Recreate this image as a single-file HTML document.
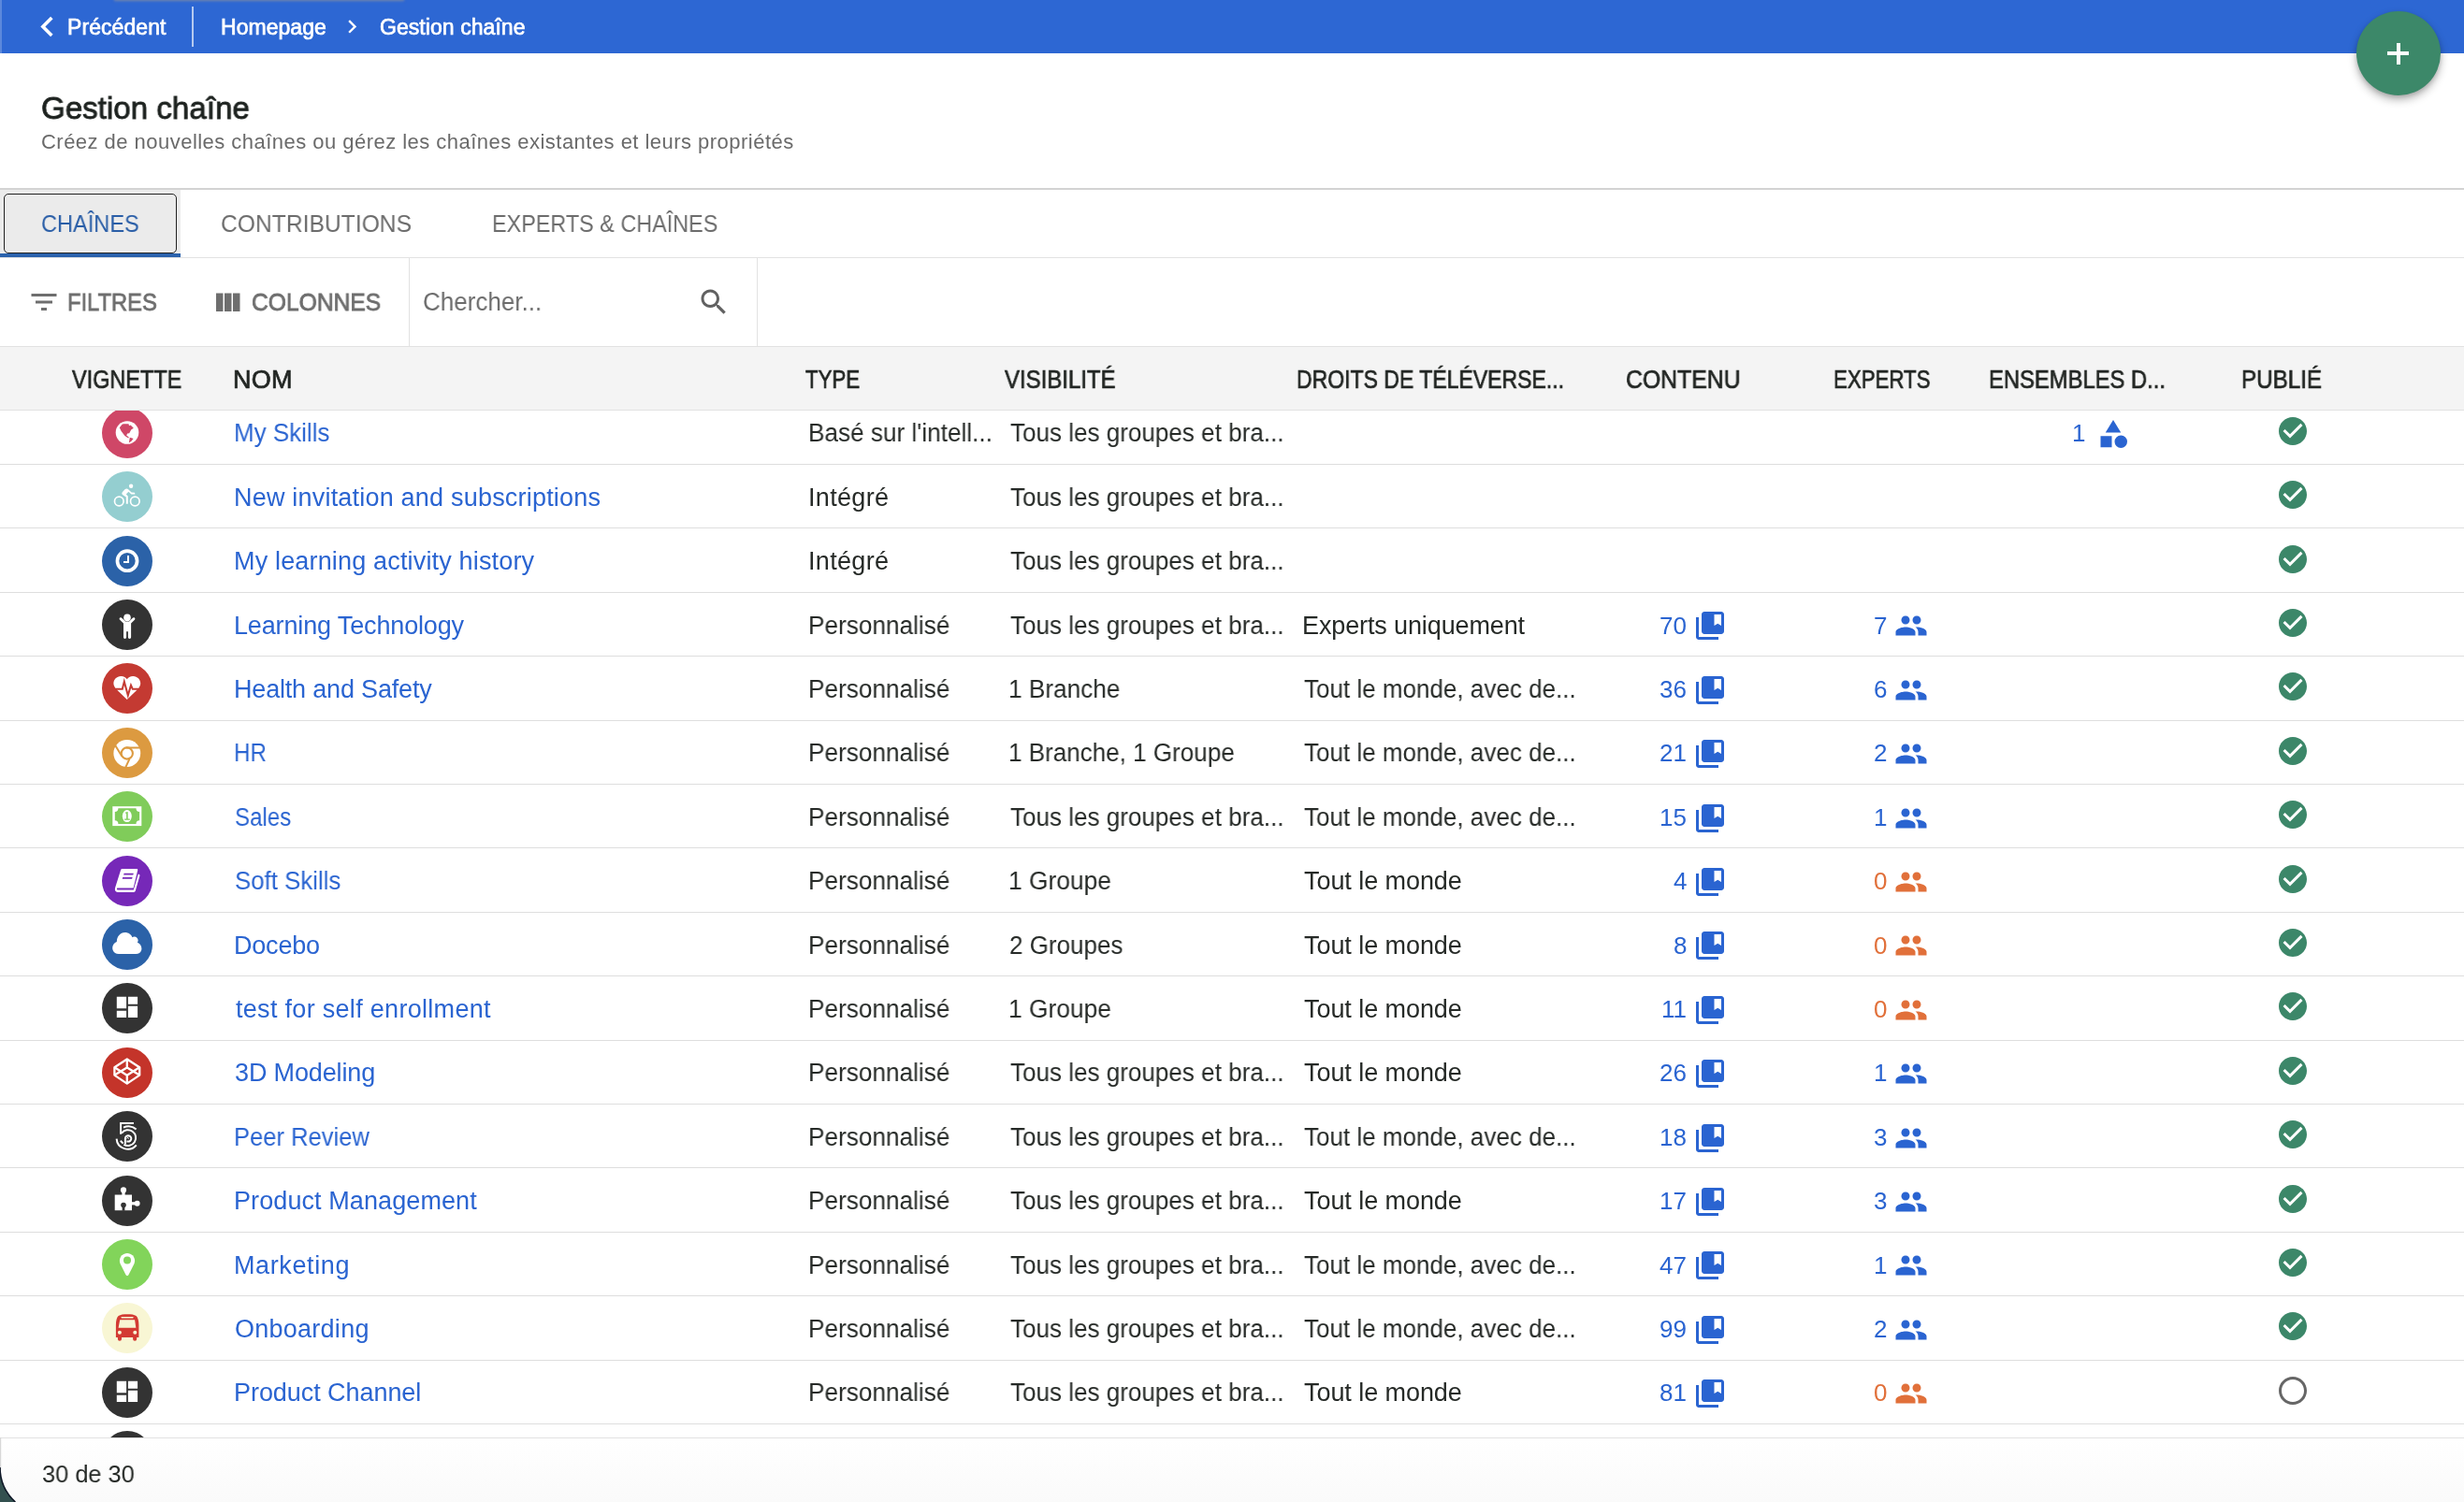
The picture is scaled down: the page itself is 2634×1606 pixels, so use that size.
<!DOCTYPE html>
<html lang="fr"><head><meta charset="utf-8"><title>Gestion chaîne</title>
<style>
html,body{margin:0;padding:0;}
body{width:2634px;height:1606px;overflow:hidden;position:relative;background:#fff;font-family:"Liberation Sans", sans-serif;}
.t{position:absolute;white-space:pre;font-family:"Liberation Sans", sans-serif;will-change:transform;}
.ic{position:absolute;overflow:visible;}
.hl{position:absolute;left:0;width:2634px;height:1px;background:#DEDEDE;}
#bar{position:absolute;left:0;top:0;width:2634px;height:57px;background:#2D67D3;}
#fab{position:absolute;left:2519px;top:12px;width:90px;height:90px;border-radius:50%;background:#3C8869;box-shadow:0 5px 10px rgba(0,0,0,0.28),0 2px 4px rgba(0,0,0,0.12);}
#fab:before{content:'';position:absolute;left:33px;top:43px;width:23.3px;height:4px;background:#fff;}
#fab:after{content:'';position:absolute;left:42.9px;top:33.5px;width:4px;height:23.4px;background:#fff;}
#hsep{position:absolute;left:0;top:201px;width:2634px;height:2px;background:#D3D3D3;}
#tabsel{position:absolute;left:0;top:203px;width:193px;height:68px;background:#EBEBEB;}
#tabfocus{position:absolute;left:4.2px;top:207px;width:184.6px;height:63.6px;border:1.3px solid #222;border-radius:5px;box-sizing:border-box;}
#tabline{position:absolute;left:0;top:271px;width:193px;height:4px;background:#2B62AC;}
#tabsb{position:absolute;left:0;top:275px;width:2634px;height:1.3px;background:#E2E2E2;}
#tbsep1{position:absolute;left:437px;top:276px;width:1.3px;height:94px;background:#E2E2E2;}
#tbsep2{position:absolute;left:809px;top:276px;width:1.3px;height:94px;background:#E2E2E2;}
#thead{position:absolute;left:0;top:370px;width:2634px;height:69.3px;background:#F4F4F4;border-top:1.3px solid #E2E2E2;border-bottom:1.3px solid #E2E2E2;box-sizing:border-box;z-index:2;}
#tbody{position:absolute;left:0;top:439px;width:2634px;height:1098.6px;overflow:hidden;}
#tbody .inner{position:absolute;left:0;top:-439px;width:2634px;height:1606px;}
#footer{position:absolute;left:0;top:1537px;width:2634px;height:69px;background:linear-gradient(#FFFFFF,#FAFAFA);border-top:1.3px solid #E2E2E2;box-sizing:border-box;}
#corner{position:absolute;left:0;top:1540px;width:20px;height:66px;overflow:hidden;}
</style></head><body>
<div id="bar"></div><div style="position:absolute;left:0;top:0;width:2px;height:57px;background:rgba(255,255,255,0.22)"></div><div style="position:absolute;left:122px;top:-3px;width:310px;height:3px;box-shadow:0 1px 3px rgba(140,145,160,0.8);background:rgba(140,145,160,0.6)"></div>
<svg class=ic style='left:29.2px;top:7.1px' width='43' height='43' viewBox='0 0 24 24'><path fill='#fff' d='M15.41 7.41L14 6l-6 6 6 6 1.41-1.41L10.83 12z'/></svg>
<div style="position:absolute;left:205.3px;top:7px;width:1.5px;height:43px;background:rgba(255,255,255,0.65)"></div>
<svg class=ic style='left:362px;top:14.2px' width='28.8' height='28.8' viewBox='0 0 24 24'><path fill='#fff' d='M10 6L8.59 7.41 13.17 12l-4.58 4.59L10 18l6-6z'/></svg>
<div id="fab"></div>
<div id="hsep"></div>
<div id="tabsel"></div><div id="tabfocus"></div><div id="tabline"></div><div id="tabsb"></div>
<div id="tbsep1"></div><div id="tbsep2"></div>
<svg class=ic style='left:28.70px;top:304.80px' width='36' height='36' viewBox='0 0 24 24'><path fill='#6E6E6E' d='M10 18h4v-2h-4v2zM3 6v2h18V6H3zm3 7h12v-2H6v2z'/></svg>
<svg class=ic style='left:225.00px;top:306.30px' width='36' height='36' viewBox='0 0 24 24'><path fill='#6E6E6E' d='M10 18h5V5h-5v13zm-6 0h5V5H4v13zM16 5v13h5V5h-5z'/></svg>
<svg class=ic style='left:744.50px;top:304.90px' width='36' height='36' viewBox='0 0 24 24'><path fill='#616161' d='M15.5 14h-.79l-.28-.27C15.41 12.59 16 11.11 16 9.5 16 5.91 13.09 3 9.5 3S3 5.91 3 9.5 5.91 16 9.5 16c1.61 0 3.09-.59 4.23-1.57l.27.28v.79l5 4.99L20.49 19l-4.99-5zm-6 0C7.01 14 5 11.99 5 9.5S7.01 5 9.5 5 14 7.01 14 9.5 11.99 14 9.5 14z'/></svg>
<div id="thead"></div>
<div id="tbody"><div class="inner">
<div class=hl style='top:496px'></div><div class=hl style='top:564px'></div><div class=hl style='top:633px'></div><div class=hl style='top:701px'></div><div class=hl style='top:770px'></div><div class=hl style='top:838px'></div><div class=hl style='top:906px'></div><div class=hl style='top:975px'></div><div class=hl style='top:1043px'></div><div class=hl style='top:1112px'></div><div class=hl style='top:1180px'></div><div class=hl style='top:1248px'></div><div class=hl style='top:1317px'></div><div class=hl style='top:1385px'></div><div class=hl style='top:1454px'></div><div class=hl style='top:1522px'></div>
<svg class=ic style='left:109px;top:435.80px' width='54' height='54' viewBox='0 0 54 54'><circle cx='27' cy='27' r='27' fill='#CF4767'/><circle cx='27' cy='26.5' r='12.3' fill='#fff'/><path fill='#CF4767' d='M18.8 21.2L21.6 17.8 23 17.2 28.5 17.2 29 19.2 30.6 18.5 33.8 21.8 31.2 23.4 29.2 27.2 27.2 27.6 26.2 29.6 28.8 31.6 28.2 32.6 24.4 30 20.6 25z M29.8 31.8L33.6 33 31.4 35.8 28.8 37.4z'/></svg><svg class=ic style='left:2240.50px;top:446.00px' width='36' height='36' viewBox='0 0 24 24'><path fill='#2A64D1' d='M12 2l-5.5 9h11z M17.5 13a4.5 4.5 0 1 0 0 9a4.5 4.5 0 1 0 0-9z M3 13.5h8v8H3z'/></svg><svg class=ic style='left:2432.70px;top:442.70px' width='36' height='36' viewBox='0 0 24 24'><path fill='#3C8769' d='M12 2C6.48 2 2 6.48 2 12s4.48 10 10 10 10-4.48 10-10S17.52 2 12 2zm-2 15l-5-5 1.41-1.41L10 14.17l7.59-7.59L19 8l-9 9z'/></svg><svg class=ic style='left:109px;top:504.20px' width='54' height='54' viewBox='0 0 54 54'><circle cx='27' cy='27' r='27' fill='#94CED0'/><g fill='none' stroke='#fff' stroke-width='1.7'><circle cx='18.3' cy='32' r='4.8'/><circle cx='35.3' cy='32' r='4.8'/></g><circle cx='31.1' cy='15.8' r='2.2' fill='#fff'/><path fill='#fff' d='M24.5 19.2C26 18.3 27.2 18.4 28.4 19.6L31.6 22.4 35 22.8 35.4 24.6 31.4 24.4 28.4 21.8 25.8 24.4 27.8 26.6 27.8 34.8 25.8 34.8 25.8 27.6 22 25C21 24.2 21.2 22.8 22 22z'/></svg><svg class=ic style='left:2432.70px;top:511.10px' width='36' height='36' viewBox='0 0 24 24'><path fill='#3C8769' d='M12 2C6.48 2 2 6.48 2 12s4.48 10 10 10 10-4.48 10-10S17.52 2 12 2zm-2 15l-5-5 1.41-1.41L10 14.17l7.59-7.59L19 8l-9 9z'/></svg><svg class=ic style='left:109px;top:572.60px' width='54' height='54' viewBox='0 0 54 54'><circle cx='27' cy='27' r='27' fill='#2B62A8'/><circle cx='27' cy='26.7' r='10.55' fill='none' stroke='#fff' stroke-width='3.7'/><path fill='#fff' d='M27 20.9h2v8.1h-6v-2h4z'/></svg><svg class=ic style='left:2432.70px;top:579.50px' width='36' height='36' viewBox='0 0 24 24'><path fill='#3C8769' d='M12 2C6.48 2 2 6.48 2 12s4.48 10 10 10 10-4.48 10-10S17.52 2 12 2zm-2 15l-5-5 1.41-1.41L10 14.17l7.59-7.59L19 8l-9 9z'/></svg><svg class=ic style='left:109px;top:641.00px' width='54' height='54' viewBox='0 0 54 54'><circle cx='27' cy='27' r='27' fill='#333333'/><circle cx='27' cy='19.4' r='3.8' fill='#fff'/><path fill='#fff' d='M23 25.6L19.1 21.7C18.4 21 18.5 20 19.2 19.5 19.8 19 20.7 19.1 21.2 19.7L25 23.6H29L32.8 19.7C33.3 19.1 34.2 19 34.8 19.5 35.5 20 35.6 21 34.9 21.7L31.1 25.6V40.3C31.1 41.2 30.4 41.9 29.5 41.9 28.6 41.9 27.9 41.2 27.9 40.3V34.2H26.1V40.3C26.1 41.2 25.4 41.9 24.5 41.9 23.6 41.9 23 41.2 23 40.3z'/></svg><svg class=ic style='left:1809.60px;top:651.30px' width='36' height='36' viewBox='0 0 24 24'><path fill='#2A64D1' d='M4 6H2v14c0 1.1.9 2 2 2h14v-2H4V6zm16-4H8c-1.1 0-2 .9-2 2v12c0 1.1.9 2 2 2h12c1.1 0 2-.9 2-2V4c0-1.1-.9-2-2-2zm0 10l-2.5-1.5L15 12V4h5v8z'/></svg><svg class=ic style='left:2025.30px;top:651.40px' width='36' height='36' viewBox='0 0 24 24'><path fill='#2A64D1' d='M16 11c1.66 0 2.99-1.34 2.99-3S17.66 5 16 5c-1.66 0-3 1.34-3 3s1.34 3 3 3zm-8 0c1.66 0 2.99-1.34 2.99-3S9.66 5 8 5C6.34 5 5 6.34 5 8s1.34 3 3 3zm0 2c-2.33 0-7 1.17-7 3.5V19h14v-2.5c0-2.33-4.67-3.5-7-3.5zm8 0c-.29 0-.62.02-.97.05 1.16.84 1.97 1.97 1.97 3.45V19h6v-2.5c0-2.33-4.67-3.5-7-3.5z'/></svg><svg class=ic style='left:2432.70px;top:647.90px' width='36' height='36' viewBox='0 0 24 24'><path fill='#3C8769' d='M12 2C6.48 2 2 6.48 2 12s4.48 10 10 10 10-4.48 10-10S17.52 2 12 2zm-2 15l-5-5 1.41-1.41L10 14.17l7.59-7.59L19 8l-9 9z'/></svg><svg class=ic style='left:109px;top:709.40px' width='54' height='54' viewBox='0 0 54 54'><circle cx='27' cy='27' r='27' fill='#C43A32'/><path fill='#fff' d='M26.8 17.3C25.6 15.2 23.2 13.9 20.2 14 15.8 14.2 12.4 17.6 12.4 21.6 12.4 23.6 13.2 25.4 14.4 26.9L26.8 39 39.2 26.9C40.4 25.4 41.2 23.6 41.2 21.6 41.2 17.6 37.8 14.2 33.4 14 30.4 13.9 28 15.2 26.8 17.3z'/><path fill='none' stroke='#C43A32' stroke-width='2' d='M10 27.8H21.8L23.8 19.8 27.8 34.6 31 23.6 32.8 27.8H44'/></svg><svg class=ic style='left:1809.60px;top:719.70px' width='36' height='36' viewBox='0 0 24 24'><path fill='#2A64D1' d='M4 6H2v14c0 1.1.9 2 2 2h14v-2H4V6zm16-4H8c-1.1 0-2 .9-2 2v12c0 1.1.9 2 2 2h12c1.1 0 2-.9 2-2V4c0-1.1-.9-2-2-2zm0 10l-2.5-1.5L15 12V4h5v8z'/></svg><svg class=ic style='left:2025.30px;top:719.80px' width='36' height='36' viewBox='0 0 24 24'><path fill='#2A64D1' d='M16 11c1.66 0 2.99-1.34 2.99-3S17.66 5 16 5c-1.66 0-3 1.34-3 3s1.34 3 3 3zm-8 0c1.66 0 2.99-1.34 2.99-3S9.66 5 8 5C6.34 5 5 6.34 5 8s1.34 3 3 3zm0 2c-2.33 0-7 1.17-7 3.5V19h14v-2.5c0-2.33-4.67-3.5-7-3.5zm8 0c-.29 0-.62.02-.97.05 1.16.84 1.97 1.97 1.97 3.45V19h6v-2.5c0-2.33-4.67-3.5-7-3.5z'/></svg><svg class=ic style='left:2432.70px;top:716.30px' width='36' height='36' viewBox='0 0 24 24'><path fill='#3C8769' d='M12 2C6.48 2 2 6.48 2 12s4.48 10 10 10 10-4.48 10-10S17.52 2 12 2zm-2 15l-5-5 1.41-1.41L10 14.17l7.59-7.59L19 8l-9 9z'/></svg><svg class=ic style='left:109px;top:777.80px' width='54' height='54' viewBox='0 0 54 54'><circle cx='27' cy='27' r='27' fill='#DC9A40'/><circle cx='26.8' cy='27.5' r='14.4' fill='#fff'/><circle cx='26.8' cy='27.5' r='6.1' fill='none' stroke='#DC9A40' stroke-width='2.1'/><path fill='none' stroke='#DC9A40' stroke-width='2' d='M25.5 21.5H41 M21.4 30.8L14.2 19 M29.6 33.2L25.2 42.6'/></svg><svg class=ic style='left:1809.60px;top:788.10px' width='36' height='36' viewBox='0 0 24 24'><path fill='#2A64D1' d='M4 6H2v14c0 1.1.9 2 2 2h14v-2H4V6zm16-4H8c-1.1 0-2 .9-2 2v12c0 1.1.9 2 2 2h12c1.1 0 2-.9 2-2V4c0-1.1-.9-2-2-2zm0 10l-2.5-1.5L15 12V4h5v8z'/></svg><svg class=ic style='left:2025.30px;top:788.20px' width='36' height='36' viewBox='0 0 24 24'><path fill='#2A64D1' d='M16 11c1.66 0 2.99-1.34 2.99-3S17.66 5 16 5c-1.66 0-3 1.34-3 3s1.34 3 3 3zm-8 0c1.66 0 2.99-1.34 2.99-3S9.66 5 8 5C6.34 5 5 6.34 5 8s1.34 3 3 3zm0 2c-2.33 0-7 1.17-7 3.5V19h14v-2.5c0-2.33-4.67-3.5-7-3.5zm8 0c-.29 0-.62.02-.97.05 1.16.84 1.97 1.97 1.97 3.45V19h6v-2.5c0-2.33-4.67-3.5-7-3.5z'/></svg><svg class=ic style='left:2432.70px;top:784.70px' width='36' height='36' viewBox='0 0 24 24'><path fill='#3C8769' d='M12 2C6.48 2 2 6.48 2 12s4.48 10 10 10 10-4.48 10-10S17.52 2 12 2zm-2 15l-5-5 1.41-1.41L10 14.17l7.59-7.59L19 8l-9 9z'/></svg><svg class=ic style='left:109px;top:846.20px' width='54' height='54' viewBox='0 0 54 54'><circle cx='27' cy='27' r='27' fill='#80CC5A'/><rect x='11.3' y='16.2' width='31' height='20.9' fill='#fff'/><path fill='#80CC5A' d='M17.4 18.3H36.5A3.6 3.6 0 0 0 40.1 21.9V31.3A3.6 3.6 0 0 0 36.5 34.9H17.4A3.6 3.6 0 0 0 13.8 31.3V21.9A3.6 3.6 0 0 0 17.4 18.3z'/><ellipse cx='26.8' cy='26.6' rx='5' ry='6.5' fill='#fff'/><path fill='#80CC5A' d='M25.2 22.6L27.7 21.9V29.6H29.8V30.8H24.1V29.6H26.1V23.7L25.2 24z'/></svg><svg class=ic style='left:1809.60px;top:856.50px' width='36' height='36' viewBox='0 0 24 24'><path fill='#2A64D1' d='M4 6H2v14c0 1.1.9 2 2 2h14v-2H4V6zm16-4H8c-1.1 0-2 .9-2 2v12c0 1.1.9 2 2 2h12c1.1 0 2-.9 2-2V4c0-1.1-.9-2-2-2zm0 10l-2.5-1.5L15 12V4h5v8z'/></svg><svg class=ic style='left:2025.30px;top:856.60px' width='36' height='36' viewBox='0 0 24 24'><path fill='#2A64D1' d='M16 11c1.66 0 2.99-1.34 2.99-3S17.66 5 16 5c-1.66 0-3 1.34-3 3s1.34 3 3 3zm-8 0c1.66 0 2.99-1.34 2.99-3S9.66 5 8 5C6.34 5 5 6.34 5 8s1.34 3 3 3zm0 2c-2.33 0-7 1.17-7 3.5V19h14v-2.5c0-2.33-4.67-3.5-7-3.5zm8 0c-.29 0-.62.02-.97.05 1.16.84 1.97 1.97 1.97 3.45V19h6v-2.5c0-2.33-4.67-3.5-7-3.5z'/></svg><svg class=ic style='left:2432.70px;top:853.10px' width='36' height='36' viewBox='0 0 24 24'><path fill='#3C8769' d='M12 2C6.48 2 2 6.48 2 12s4.48 10 10 10 10-4.48 10-10S17.52 2 12 2zm-2 15l-5-5 1.41-1.41L10 14.17l7.59-7.59L19 8l-9 9z'/></svg><svg class=ic style='left:109px;top:914.60px' width='54' height='54' viewBox='0 0 54 54'><circle cx='27' cy='27' r='27' fill='#7628B8'/><path fill='#fff' d='M21.6 14H37.2C38 14 38.4 14.7 38.2 15.4L33.6 34.6H16.6C15.6 34.6 15.6 36.5 16.6 36.5H33.8L38.8 19.6 39.8 20C40.4 20.3 40.6 21 40.4 21.6L35.8 37.6C35.5 38.5 34.8 39 33.9 39H17.2C15.2 39 13.6 37.4 13.9 35.4 14 34.6 14.2 34 14.4 33.2L20 15.4C20.2 14.6 20.8 14 21.6 14z'/><path fill='#7628B8' d='M23.6 18.7h10.2l-.5 1.8H23.1z M22.2 23h10.4l-.5 1.8H21.7z'/></svg><svg class=ic style='left:1809.60px;top:924.90px' width='36' height='36' viewBox='0 0 24 24'><path fill='#2A64D1' d='M4 6H2v14c0 1.1.9 2 2 2h14v-2H4V6zm16-4H8c-1.1 0-2 .9-2 2v12c0 1.1.9 2 2 2h12c1.1 0 2-.9 2-2V4c0-1.1-.9-2-2-2zm0 10l-2.5-1.5L15 12V4h5v8z'/></svg><svg class=ic style='left:2025.30px;top:925.00px' width='36' height='36' viewBox='0 0 24 24'><path fill='#E1703A' d='M16 11c1.66 0 2.99-1.34 2.99-3S17.66 5 16 5c-1.66 0-3 1.34-3 3s1.34 3 3 3zm-8 0c1.66 0 2.99-1.34 2.99-3S9.66 5 8 5C6.34 5 5 6.34 5 8s1.34 3 3 3zm0 2c-2.33 0-7 1.17-7 3.5V19h14v-2.5c0-2.33-4.67-3.5-7-3.5zm8 0c-.29 0-.62.02-.97.05 1.16.84 1.97 1.97 1.97 3.45V19h6v-2.5c0-2.33-4.67-3.5-7-3.5z'/></svg><svg class=ic style='left:2432.70px;top:921.50px' width='36' height='36' viewBox='0 0 24 24'><path fill='#3C8769' d='M12 2C6.48 2 2 6.48 2 12s4.48 10 10 10 10-4.48 10-10S17.52 2 12 2zm-2 15l-5-5 1.41-1.41L10 14.17l7.59-7.59L19 8l-9 9z'/></svg><svg class=ic style='left:109px;top:983.00px' width='54' height='54' viewBox='0 0 54 54'><circle cx='27' cy='27' r='27' fill='#2B62A8'/><path fill='#fff' d='M17.8 37.1C14.2 37.1 11.2 34.2 11.2 30.6 11.2 27.6 13.2 25 15.8 24 16 18.4 19.4 14 24.6 14 28.4 14 31.2 16.2 32.4 19.2 33 18.6 33.8 18.4 34.6 18.4 36.8 18.4 38.6 20.2 38.6 22.4 38.6 23.4 38.4 24 37.8 24.8 40.6 26 42.4 28.4 42.4 31.2 42.4 34.6 39.8 37.1 36.4 37.1z'/></svg><svg class=ic style='left:1809.60px;top:993.30px' width='36' height='36' viewBox='0 0 24 24'><path fill='#2A64D1' d='M4 6H2v14c0 1.1.9 2 2 2h14v-2H4V6zm16-4H8c-1.1 0-2 .9-2 2v12c0 1.1.9 2 2 2h12c1.1 0 2-.9 2-2V4c0-1.1-.9-2-2-2zm0 10l-2.5-1.5L15 12V4h5v8z'/></svg><svg class=ic style='left:2025.30px;top:993.40px' width='36' height='36' viewBox='0 0 24 24'><path fill='#E1703A' d='M16 11c1.66 0 2.99-1.34 2.99-3S17.66 5 16 5c-1.66 0-3 1.34-3 3s1.34 3 3 3zm-8 0c1.66 0 2.99-1.34 2.99-3S9.66 5 8 5C6.34 5 5 6.34 5 8s1.34 3 3 3zm0 2c-2.33 0-7 1.17-7 3.5V19h14v-2.5c0-2.33-4.67-3.5-7-3.5zm8 0c-.29 0-.62.02-.97.05 1.16.84 1.97 1.97 1.97 3.45V19h6v-2.5c0-2.33-4.67-3.5-7-3.5z'/></svg><svg class=ic style='left:2432.70px;top:989.90px' width='36' height='36' viewBox='0 0 24 24'><path fill='#3C8769' d='M12 2C6.48 2 2 6.48 2 12s4.48 10 10 10 10-4.48 10-10S17.52 2 12 2zm-2 15l-5-5 1.41-1.41L10 14.17l7.59-7.59L19 8l-9 9z'/></svg><svg class=ic style='left:109px;top:1051.40px' width='54' height='54' viewBox='0 0 54 54'><circle cx='27' cy='27' r='27' fill='#333333'/><path fill='#fff' d='M15.8 14.7h10.3v12.6H15.8z M15.8 29.7h10.3v7.4H15.8z M27.9 14.7h10.2v8.1H27.9z M27.9 24.8h10.2v12.3H27.9z'/></svg><svg class=ic style='left:1809.60px;top:1061.70px' width='36' height='36' viewBox='0 0 24 24'><path fill='#2A64D1' d='M4 6H2v14c0 1.1.9 2 2 2h14v-2H4V6zm16-4H8c-1.1 0-2 .9-2 2v12c0 1.1.9 2 2 2h12c1.1 0 2-.9 2-2V4c0-1.1-.9-2-2-2zm0 10l-2.5-1.5L15 12V4h5v8z'/></svg><svg class=ic style='left:2025.30px;top:1061.80px' width='36' height='36' viewBox='0 0 24 24'><path fill='#E1703A' d='M16 11c1.66 0 2.99-1.34 2.99-3S17.66 5 16 5c-1.66 0-3 1.34-3 3s1.34 3 3 3zm-8 0c1.66 0 2.99-1.34 2.99-3S9.66 5 8 5C6.34 5 5 6.34 5 8s1.34 3 3 3zm0 2c-2.33 0-7 1.17-7 3.5V19h14v-2.5c0-2.33-4.67-3.5-7-3.5zm8 0c-.29 0-.62.02-.97.05 1.16.84 1.97 1.97 1.97 3.45V19h6v-2.5c0-2.33-4.67-3.5-7-3.5z'/></svg><svg class=ic style='left:2432.70px;top:1058.30px' width='36' height='36' viewBox='0 0 24 24'><path fill='#3C8769' d='M12 2C6.48 2 2 6.48 2 12s4.48 10 10 10 10-4.48 10-10S17.52 2 12 2zm-2 15l-5-5 1.41-1.41L10 14.17l7.59-7.59L19 8l-9 9z'/></svg><svg class=ic style='left:109px;top:1119.80px' width='54' height='54' viewBox='0 0 54 54'><circle cx='27' cy='27' r='27' fill='#C4342A'/><g fill='none' stroke='#fff' stroke-width='2.3' stroke-linejoin='round'><path d='M26.8 12.5L40.2 21.2V29.6L26.8 38.6 13.4 29.6V21.2z'/><path d='M26.8 12.5V21.4 M26.8 29.8V38.6 M13.4 21.2L26.8 29.8 40.2 21.2 M13.4 29.6L26.8 21.4 40.2 29.6'/></g></svg><svg class=ic style='left:1809.60px;top:1130.10px' width='36' height='36' viewBox='0 0 24 24'><path fill='#2A64D1' d='M4 6H2v14c0 1.1.9 2 2 2h14v-2H4V6zm16-4H8c-1.1 0-2 .9-2 2v12c0 1.1.9 2 2 2h12c1.1 0 2-.9 2-2V4c0-1.1-.9-2-2-2zm0 10l-2.5-1.5L15 12V4h5v8z'/></svg><svg class=ic style='left:2025.30px;top:1130.20px' width='36' height='36' viewBox='0 0 24 24'><path fill='#2A64D1' d='M16 11c1.66 0 2.99-1.34 2.99-3S17.66 5 16 5c-1.66 0-3 1.34-3 3s1.34 3 3 3zm-8 0c1.66 0 2.99-1.34 2.99-3S9.66 5 8 5C6.34 5 5 6.34 5 8s1.34 3 3 3zm0 2c-2.33 0-7 1.17-7 3.5V19h14v-2.5c0-2.33-4.67-3.5-7-3.5zm8 0c-.29 0-.62.02-.97.05 1.16.84 1.97 1.97 1.97 3.45V19h6v-2.5c0-2.33-4.67-3.5-7-3.5z'/></svg><svg class=ic style='left:2432.70px;top:1126.70px' width='36' height='36' viewBox='0 0 24 24'><path fill='#3C8769' d='M12 2C6.48 2 2 6.48 2 12s4.48 10 10 10 10-4.48 10-10S17.52 2 12 2zm-2 15l-5-5 1.41-1.41L10 14.17l7.59-7.59L19 8l-9 9z'/></svg><svg class=ic style='left:109px;top:1188.20px' width='54' height='54' viewBox='0 0 54 54'><circle cx='27' cy='27' r='27' fill='#333333'/><g fill='none' stroke='#fff' stroke-width='2'><path d='M34 13H20.1V24.8'/><path d='M23 17.6C27 15.6 32.5 15.8 36.6 19.4'/><path d='M21 23.6A8.4 8.4 0 1 1 23.4 35.8'/><path d='M15.6 29.6A12 12 0 0 0 36.8 36.4'/><path d='M19.8 31.8L22.6 34.6'/><path d='M24.9 35.4V29.2A3.2 3.2 0 1 1 27.8 32.6H26.4'/></g><path stroke='#fff' stroke-width='1' d='M26.6 27.6l2 2 M28.6 27.6l-2 2'/></svg><svg class=ic style='left:1809.60px;top:1198.50px' width='36' height='36' viewBox='0 0 24 24'><path fill='#2A64D1' d='M4 6H2v14c0 1.1.9 2 2 2h14v-2H4V6zm16-4H8c-1.1 0-2 .9-2 2v12c0 1.1.9 2 2 2h12c1.1 0 2-.9 2-2V4c0-1.1-.9-2-2-2zm0 10l-2.5-1.5L15 12V4h5v8z'/></svg><svg class=ic style='left:2025.30px;top:1198.60px' width='36' height='36' viewBox='0 0 24 24'><path fill='#2A64D1' d='M16 11c1.66 0 2.99-1.34 2.99-3S17.66 5 16 5c-1.66 0-3 1.34-3 3s1.34 3 3 3zm-8 0c1.66 0 2.99-1.34 2.99-3S9.66 5 8 5C6.34 5 5 6.34 5 8s1.34 3 3 3zm0 2c-2.33 0-7 1.17-7 3.5V19h14v-2.5c0-2.33-4.67-3.5-7-3.5zm8 0c-.29 0-.62.02-.97.05 1.16.84 1.97 1.97 1.97 3.45V19h6v-2.5c0-2.33-4.67-3.5-7-3.5z'/></svg><svg class=ic style='left:2432.70px;top:1195.10px' width='36' height='36' viewBox='0 0 24 24'><path fill='#3C8769' d='M12 2C6.48 2 2 6.48 2 12s4.48 10 10 10 10-4.48 10-10S17.52 2 12 2zm-2 15l-5-5 1.41-1.41L10 14.17l7.59-7.59L19 8l-9 9z'/></svg><svg class=ic style='left:109px;top:1256.60px' width='54' height='54' viewBox='0 0 54 54'><circle cx='27' cy='27' r='27' fill='#333333'/><rect x='13.7' y='20.5' width='18.3' height='16.7' fill='#fff'/><circle cx='23' cy='15.4' r='3.1' fill='#fff'/><rect x='21.4' y='17' width='3.2' height='4' fill='#fff'/><circle cx='37.6' cy='29.8' r='3' fill='#fff'/><rect x='31' y='28.2' width='4' height='3.2' fill='#fff'/><circle cx='23' cy='31.5' r='2.8' fill='#333333'/><rect x='21.6' y='32' width='2.8' height='5.6' fill='#333333'/></svg><svg class=ic style='left:1809.60px;top:1266.90px' width='36' height='36' viewBox='0 0 24 24'><path fill='#2A64D1' d='M4 6H2v14c0 1.1.9 2 2 2h14v-2H4V6zm16-4H8c-1.1 0-2 .9-2 2v12c0 1.1.9 2 2 2h12c1.1 0 2-.9 2-2V4c0-1.1-.9-2-2-2zm0 10l-2.5-1.5L15 12V4h5v8z'/></svg><svg class=ic style='left:2025.30px;top:1267.00px' width='36' height='36' viewBox='0 0 24 24'><path fill='#2A64D1' d='M16 11c1.66 0 2.99-1.34 2.99-3S17.66 5 16 5c-1.66 0-3 1.34-3 3s1.34 3 3 3zm-8 0c1.66 0 2.99-1.34 2.99-3S9.66 5 8 5C6.34 5 5 6.34 5 8s1.34 3 3 3zm0 2c-2.33 0-7 1.17-7 3.5V19h14v-2.5c0-2.33-4.67-3.5-7-3.5zm8 0c-.29 0-.62.02-.97.05 1.16.84 1.97 1.97 1.97 3.45V19h6v-2.5c0-2.33-4.67-3.5-7-3.5z'/></svg><svg class=ic style='left:2432.70px;top:1263.50px' width='36' height='36' viewBox='0 0 24 24'><path fill='#3C8769' d='M12 2C6.48 2 2 6.48 2 12s4.48 10 10 10 10-4.48 10-10S17.52 2 12 2zm-2 15l-5-5 1.41-1.41L10 14.17l7.59-7.59L19 8l-9 9z'/></svg><svg class=ic style='left:109px;top:1325.00px' width='54' height='54' viewBox='0 0 54 54'><circle cx='27' cy='27' r='27' fill='#82D45A'/><path fill='#fff' d='M27 14.9C22.5 14.9 18.9 18.5 18.9 23 18.9 24.4 19.3 25.6 19.8 26.8L25.6 38.3C26.2 39.4 27.8 39.4 28.4 38.3L34.2 26.8C34.7 25.6 35.1 24.4 35.1 23 35.1 18.5 31.5 14.9 27 14.9z'/><circle cx='27' cy='22.5' r='4' fill='#82D45A'/></svg><svg class=ic style='left:1809.60px;top:1335.30px' width='36' height='36' viewBox='0 0 24 24'><path fill='#2A64D1' d='M4 6H2v14c0 1.1.9 2 2 2h14v-2H4V6zm16-4H8c-1.1 0-2 .9-2 2v12c0 1.1.9 2 2 2h12c1.1 0 2-.9 2-2V4c0-1.1-.9-2-2-2zm0 10l-2.5-1.5L15 12V4h5v8z'/></svg><svg class=ic style='left:2025.30px;top:1335.40px' width='36' height='36' viewBox='0 0 24 24'><path fill='#2A64D1' d='M16 11c1.66 0 2.99-1.34 2.99-3S17.66 5 16 5c-1.66 0-3 1.34-3 3s1.34 3 3 3zm-8 0c1.66 0 2.99-1.34 2.99-3S9.66 5 8 5C6.34 5 5 6.34 5 8s1.34 3 3 3zm0 2c-2.33 0-7 1.17-7 3.5V19h14v-2.5c0-2.33-4.67-3.5-7-3.5zm8 0c-.29 0-.62.02-.97.05 1.16.84 1.97 1.97 1.97 3.45V19h6v-2.5c0-2.33-4.67-3.5-7-3.5z'/></svg><svg class=ic style='left:2432.70px;top:1331.90px' width='36' height='36' viewBox='0 0 24 24'><path fill='#3C8769' d='M12 2C6.48 2 2 6.48 2 12s4.48 10 10 10 10-4.48 10-10S17.52 2 12 2zm-2 15l-5-5 1.41-1.41L10 14.17l7.59-7.59L19 8l-9 9z'/></svg><svg class=ic style='left:109px;top:1393.40px' width='54' height='54' viewBox='0 0 54 54'><circle cx='27' cy='27' r='27' fill='#F8F6D4'/><path fill='#D33A33' d='M14.9 36.9V24C14.9 19 15.8 15.4 17.6 14 19.6 12.6 23 12.2 27.1 12.2 31.2 12.2 34.6 12.6 36.6 14 38.4 15.4 39.4 19 39.4 24V36.9z M16.9 36.5h4.1v2.3a2.05 2.05 0 0 1-4.1 0z M33.1 36.5h4.1v2.3a2.05 2.05 0 0 1-4.1 0z'/><path fill='#F8F6D4' d='M21.2 14.9h11.7a.8 .8 0 0 1 0 1.6h-11.7a.8 .8 0 0 1 0-1.6z M19.2 18.3H35.1L36.3 26.8H17.6z'/><circle cx='18.9' cy='31.8' r='2' fill='#F8F6D4'/><circle cx='35.3' cy='31.8' r='2' fill='#F8F6D4'/></svg><svg class=ic style='left:1809.60px;top:1403.70px' width='36' height='36' viewBox='0 0 24 24'><path fill='#2A64D1' d='M4 6H2v14c0 1.1.9 2 2 2h14v-2H4V6zm16-4H8c-1.1 0-2 .9-2 2v12c0 1.1.9 2 2 2h12c1.1 0 2-.9 2-2V4c0-1.1-.9-2-2-2zm0 10l-2.5-1.5L15 12V4h5v8z'/></svg><svg class=ic style='left:2025.30px;top:1403.80px' width='36' height='36' viewBox='0 0 24 24'><path fill='#2A64D1' d='M16 11c1.66 0 2.99-1.34 2.99-3S17.66 5 16 5c-1.66 0-3 1.34-3 3s1.34 3 3 3zm-8 0c1.66 0 2.99-1.34 2.99-3S9.66 5 8 5C6.34 5 5 6.34 5 8s1.34 3 3 3zm0 2c-2.33 0-7 1.17-7 3.5V19h14v-2.5c0-2.33-4.67-3.5-7-3.5zm8 0c-.29 0-.62.02-.97.05 1.16.84 1.97 1.97 1.97 3.45V19h6v-2.5c0-2.33-4.67-3.5-7-3.5z'/></svg><svg class=ic style='left:2432.70px;top:1400.30px' width='36' height='36' viewBox='0 0 24 24'><path fill='#3C8769' d='M12 2C6.48 2 2 6.48 2 12s4.48 10 10 10 10-4.48 10-10S17.52 2 12 2zm-2 15l-5-5 1.41-1.41L10 14.17l7.59-7.59L19 8l-9 9z'/></svg><svg class=ic style='left:109px;top:1461.80px' width='54' height='54' viewBox='0 0 54 54'><circle cx='27' cy='27' r='27' fill='#333333'/><path fill='#fff' d='M15.8 14.7h10.3v12.6H15.8z M15.8 29.7h10.3v7.4H15.8z M27.9 14.7h10.2v8.1H27.9z M27.9 24.8h10.2v12.3H27.9z'/></svg><svg class=ic style='left:1809.60px;top:1472.10px' width='36' height='36' viewBox='0 0 24 24'><path fill='#2A64D1' d='M4 6H2v14c0 1.1.9 2 2 2h14v-2H4V6zm16-4H8c-1.1 0-2 .9-2 2v12c0 1.1.9 2 2 2h12c1.1 0 2-.9 2-2V4c0-1.1-.9-2-2-2zm0 10l-2.5-1.5L15 12V4h5v8z'/></svg><svg class=ic style='left:2025.30px;top:1472.20px' width='36' height='36' viewBox='0 0 24 24'><path fill='#E1703A' d='M16 11c1.66 0 2.99-1.34 2.99-3S17.66 5 16 5c-1.66 0-3 1.34-3 3s1.34 3 3 3zm-8 0c1.66 0 2.99-1.34 2.99-3S9.66 5 8 5C6.34 5 5 6.34 5 8s1.34 3 3 3zm0 2c-2.33 0-7 1.17-7 3.5V19h14v-2.5c0-2.33-4.67-3.5-7-3.5zm8 0c-.29 0-.62.02-.97.05 1.16.84 1.97 1.97 1.97 3.45V19h6v-2.5c0-2.33-4.67-3.5-7-3.5z'/></svg><svg class=ic style='left:2432.70px;top:1468.70px' width='36' height='36' viewBox='0 0 24 24'><path fill='#666666' d='M12 2C6.48 2 2 6.48 2 12s4.48 10 10 10 10-4.48 10-10S17.52 2 12 2zm0 18c-4.42 0-8-3.58-8-8s3.58-8 8-8 8 3.58 8 8-3.58 8-8 8z'/></svg><svg class=ic style='left:109px;top:1529.60px' width='54' height='54' viewBox='0 0 54 54'><circle cx='27' cy='27' r='27' fill='#333333'/></svg>

<div class=t style='left:250.08px;top:450.40px;font-size:27px;line-height:27px;font-weight:normal;color:#2A64D1;letter-spacing:0.000px;transform:scaleX(0.9616);transform-origin:0 0;'>My Skills</div><div class=t style='left:864.06px;top:450.40px;font-size:27px;line-height:27px;font-weight:normal;color:#262A27;letter-spacing:0.000px;transform:scaleX(0.9688);transform-origin:0 0;'>Basé sur l'intell...</div><div class=t style='left:1080.30px;top:450.40px;font-size:27px;line-height:27px;font-weight:normal;color:#262A27;letter-spacing:0.000px;transform:scaleX(0.9646);transform-origin:0 0;'>Tous les groupes et bra...</div><div class=t style='left:250.00px;top:518.80px;font-size:27px;line-height:27px;font-weight:normal;color:#2A64D1;letter-spacing:0.203px;'>New invitation and subscriptions</div><div class=t style='left:864.00px;top:518.80px;font-size:27px;line-height:27px;font-weight:normal;color:#262A27;letter-spacing:0.326px;'>Intégré</div><div class=t style='left:1080.30px;top:518.80px;font-size:27px;line-height:27px;font-weight:normal;color:#262A27;letter-spacing:0.000px;transform:scaleX(0.9646);transform-origin:0 0;'>Tous les groupes et bra...</div><div class=t style='left:250.00px;top:587.20px;font-size:27px;line-height:27px;font-weight:normal;color:#2A64D1;letter-spacing:0.167px;'>My learning activity history</div><div class=t style='left:864.00px;top:587.20px;font-size:27px;line-height:27px;font-weight:normal;color:#262A27;letter-spacing:0.326px;'>Intégré</div><div class=t style='left:1080.30px;top:587.20px;font-size:27px;line-height:27px;font-weight:normal;color:#262A27;letter-spacing:0.000px;transform:scaleX(0.9646);transform-origin:0 0;'>Tous les groupes et bra...</div><div class=t style='left:250.00px;top:655.60px;font-size:27px;line-height:27px;font-weight:normal;color:#2A64D1;letter-spacing:-0.144px;'>Learning Technology</div><div class=t style='left:864.06px;top:655.60px;font-size:27px;line-height:27px;font-weight:normal;color:#262A27;letter-spacing:0.000px;transform:scaleX(0.9701);transform-origin:0 0;'>Personnalisé</div><div class=t style='left:1080.30px;top:655.60px;font-size:27px;line-height:27px;font-weight:normal;color:#262A27;letter-spacing:0.000px;transform:scaleX(0.9646);transform-origin:0 0;'>Tous les groupes et bra...</div><div class=t style='left:1392.20px;top:655.60px;font-size:27px;line-height:27px;font-weight:normal;color:#262A27;letter-spacing:-0.120px;'>Experts uniquement</div><div class=t style='left:250.00px;top:724.00px;font-size:27px;line-height:27px;font-weight:normal;color:#2A64D1;letter-spacing:-0.184px;'>Health and Safety</div><div class=t style='left:864.06px;top:724.00px;font-size:27px;line-height:27px;font-weight:normal;color:#262A27;letter-spacing:0.000px;transform:scaleX(0.9701);transform-origin:0 0;'>Personnalisé</div><div class=t style='left:1078.36px;top:724.00px;font-size:27px;line-height:27px;font-weight:normal;color:#262A27;letter-spacing:0.000px;transform:scaleX(0.9703);transform-origin:0 0;'>1 Branche</div><div class=t style='left:1394.20px;top:724.00px;font-size:27px;line-height:27px;font-weight:normal;color:#262A27;letter-spacing:0.000px;transform:scaleX(0.9634);transform-origin:0 0;'>Tout le monde, avec de...</div><div class=t style='left:250.21px;top:792.40px;font-size:27px;line-height:27px;font-weight:normal;color:#2A64D1;letter-spacing:0.000px;transform:scaleX(0.8959);transform-origin:0 0;'>HR</div><div class=t style='left:864.06px;top:792.40px;font-size:27px;line-height:27px;font-weight:normal;color:#262A27;letter-spacing:0.000px;transform:scaleX(0.9701);transform-origin:0 0;'>Personnalisé</div><div class=t style='left:1078.37px;top:792.40px;font-size:27px;line-height:27px;font-weight:normal;color:#262A27;letter-spacing:0.000px;transform:scaleX(0.9643);transform-origin:0 0;'>1 Branche, 1 Groupe</div><div class=t style='left:1394.20px;top:792.40px;font-size:27px;line-height:27px;font-weight:normal;color:#262A27;letter-spacing:0.000px;transform:scaleX(0.9634);transform-origin:0 0;'>Tout le monde, avec de...</div><div class=t style='left:251.11px;top:860.80px;font-size:27px;line-height:27px;font-weight:normal;color:#2A64D1;letter-spacing:0.000px;transform:scaleX(0.8919);transform-origin:0 0;'>Sales</div><div class=t style='left:864.06px;top:860.80px;font-size:27px;line-height:27px;font-weight:normal;color:#262A27;letter-spacing:0.000px;transform:scaleX(0.9701);transform-origin:0 0;'>Personnalisé</div><div class=t style='left:1080.30px;top:860.80px;font-size:27px;line-height:27px;font-weight:normal;color:#262A27;letter-spacing:0.000px;transform:scaleX(0.9646);transform-origin:0 0;'>Tous les groupes et bra...</div><div class=t style='left:1394.20px;top:860.80px;font-size:27px;line-height:27px;font-weight:normal;color:#262A27;letter-spacing:0.000px;transform:scaleX(0.9634);transform-origin:0 0;'>Tout le monde, avec de...</div><div class=t style='left:251.04px;top:929.20px;font-size:27px;line-height:27px;font-weight:normal;color:#2A64D1;letter-spacing:0.000px;transform:scaleX(0.9561);transform-origin:0 0;'>Soft Skills</div><div class=t style='left:864.06px;top:929.20px;font-size:27px;line-height:27px;font-weight:normal;color:#262A27;letter-spacing:0.000px;transform:scaleX(0.9701);transform-origin:0 0;'>Personnalisé</div><div class=t style='left:1078.35px;top:929.20px;font-size:27px;line-height:27px;font-weight:normal;color:#262A27;letter-spacing:0.000px;transform:scaleX(0.9766);transform-origin:0 0;'>1 Groupe</div><div class=t style='left:1394.20px;top:929.20px;font-size:27px;line-height:27px;font-weight:normal;color:#262A27;letter-spacing:-0.066px;'>Tout le monde</div><div class=t style='left:250.00px;top:997.60px;font-size:27px;line-height:27px;font-weight:normal;color:#2A64D1;letter-spacing:-0.209px;'>Docebo</div><div class=t style='left:864.06px;top:997.60px;font-size:27px;line-height:27px;font-weight:normal;color:#262A27;letter-spacing:0.000px;transform:scaleX(0.9701);transform-origin:0 0;'>Personnalisé</div><div class=t style='left:1079.34px;top:997.60px;font-size:27px;line-height:27px;font-weight:normal;color:#262A27;letter-spacing:0.000px;transform:scaleX(0.9633);transform-origin:0 0;'>2 Groupes</div><div class=t style='left:1394.20px;top:997.60px;font-size:27px;line-height:27px;font-weight:normal;color:#262A27;letter-spacing:-0.066px;'>Tout le monde</div><div class=t style='left:252.00px;top:1066.00px;font-size:27px;line-height:27px;font-weight:normal;color:#2A64D1;letter-spacing:0.300px;'>test for self enrollment</div><div class=t style='left:864.06px;top:1066.00px;font-size:27px;line-height:27px;font-weight:normal;color:#262A27;letter-spacing:0.000px;transform:scaleX(0.9701);transform-origin:0 0;'>Personnalisé</div><div class=t style='left:1078.35px;top:1066.00px;font-size:27px;line-height:27px;font-weight:normal;color:#262A27;letter-spacing:0.000px;transform:scaleX(0.9766);transform-origin:0 0;'>1 Groupe</div><div class=t style='left:1394.20px;top:1066.00px;font-size:27px;line-height:27px;font-weight:normal;color:#262A27;letter-spacing:-0.066px;'>Tout le monde</div><div class=t style='left:251.00px;top:1134.40px;font-size:27px;line-height:27px;font-weight:normal;color:#2A64D1;letter-spacing:-0.137px;'>3D Modeling</div><div class=t style='left:864.06px;top:1134.40px;font-size:27px;line-height:27px;font-weight:normal;color:#262A27;letter-spacing:0.000px;transform:scaleX(0.9701);transform-origin:0 0;'>Personnalisé</div><div class=t style='left:1080.30px;top:1134.40px;font-size:27px;line-height:27px;font-weight:normal;color:#262A27;letter-spacing:0.000px;transform:scaleX(0.9646);transform-origin:0 0;'>Tous les groupes et bra...</div><div class=t style='left:1394.20px;top:1134.40px;font-size:27px;line-height:27px;font-weight:normal;color:#262A27;letter-spacing:-0.066px;'>Tout le monde</div><div class=t style='left:250.11px;top:1202.80px;font-size:27px;line-height:27px;font-weight:normal;color:#2A64D1;letter-spacing:0.000px;transform:scaleX(0.9468);transform-origin:0 0;'>Peer Review</div><div class=t style='left:864.06px;top:1202.80px;font-size:27px;line-height:27px;font-weight:normal;color:#262A27;letter-spacing:0.000px;transform:scaleX(0.9701);transform-origin:0 0;'>Personnalisé</div><div class=t style='left:1080.30px;top:1202.80px;font-size:27px;line-height:27px;font-weight:normal;color:#262A27;letter-spacing:0.000px;transform:scaleX(0.9646);transform-origin:0 0;'>Tous les groupes et bra...</div><div class=t style='left:1394.20px;top:1202.80px;font-size:27px;line-height:27px;font-weight:normal;color:#262A27;letter-spacing:0.000px;transform:scaleX(0.9634);transform-origin:0 0;'>Tout le monde, avec de...</div><div class=t style='left:250.00px;top:1271.20px;font-size:27px;line-height:27px;font-weight:normal;color:#2A64D1;letter-spacing:0.091px;'>Product Management</div><div class=t style='left:864.06px;top:1271.20px;font-size:27px;line-height:27px;font-weight:normal;color:#262A27;letter-spacing:0.000px;transform:scaleX(0.9701);transform-origin:0 0;'>Personnalisé</div><div class=t style='left:1080.30px;top:1271.20px;font-size:27px;line-height:27px;font-weight:normal;color:#262A27;letter-spacing:0.000px;transform:scaleX(0.9646);transform-origin:0 0;'>Tous les groupes et bra...</div><div class=t style='left:1394.20px;top:1271.20px;font-size:27px;line-height:27px;font-weight:normal;color:#262A27;letter-spacing:-0.066px;'>Tout le monde</div><div class=t style='left:250.00px;top:1339.60px;font-size:27px;line-height:27px;font-weight:normal;color:#2A64D1;letter-spacing:0.609px;'>Marketing</div><div class=t style='left:864.06px;top:1339.60px;font-size:27px;line-height:27px;font-weight:normal;color:#262A27;letter-spacing:0.000px;transform:scaleX(0.9701);transform-origin:0 0;'>Personnalisé</div><div class=t style='left:1080.30px;top:1339.60px;font-size:27px;line-height:27px;font-weight:normal;color:#262A27;letter-spacing:0.000px;transform:scaleX(0.9646);transform-origin:0 0;'>Tous les groupes et bra...</div><div class=t style='left:1394.20px;top:1339.60px;font-size:27px;line-height:27px;font-weight:normal;color:#262A27;letter-spacing:0.000px;transform:scaleX(0.9634);transform-origin:0 0;'>Tout le monde, avec de...</div><div class=t style='left:251.00px;top:1408.00px;font-size:27px;line-height:27px;font-weight:normal;color:#2A64D1;letter-spacing:0.257px;'>Onboarding</div><div class=t style='left:864.06px;top:1408.00px;font-size:27px;line-height:27px;font-weight:normal;color:#262A27;letter-spacing:0.000px;transform:scaleX(0.9701);transform-origin:0 0;'>Personnalisé</div><div class=t style='left:1080.30px;top:1408.00px;font-size:27px;line-height:27px;font-weight:normal;color:#262A27;letter-spacing:0.000px;transform:scaleX(0.9646);transform-origin:0 0;'>Tous les groupes et bra...</div><div class=t style='left:1394.20px;top:1408.00px;font-size:27px;line-height:27px;font-weight:normal;color:#262A27;letter-spacing:0.000px;transform:scaleX(0.9634);transform-origin:0 0;'>Tout le monde, avec de...</div><div class=t style='left:250.00px;top:1476.40px;font-size:27px;line-height:27px;font-weight:normal;color:#2A64D1;letter-spacing:-0.059px;'>Product Channel</div><div class=t style='left:864.06px;top:1476.40px;font-size:27px;line-height:27px;font-weight:normal;color:#262A27;letter-spacing:0.000px;transform:scaleX(0.9701);transform-origin:0 0;'>Personnalisé</div><div class=t style='left:1080.30px;top:1476.40px;font-size:27px;line-height:27px;font-weight:normal;color:#262A27;letter-spacing:0.000px;transform:scaleX(0.9646);transform-origin:0 0;'>Tous les groupes et bra...</div><div class=t style='left:1394.20px;top:1476.40px;font-size:27px;line-height:27px;font-weight:normal;color:#262A27;letter-spacing:-0.066px;'>Tout le monde</div><div class=t style='left:2214.80px;top:450.00px;font-size:26px;line-height:26px;color:#2A64D1'>1</div><div class=t style='left:1774.04px;top:655.60px;font-size:26px;line-height:26px;color:#2A64D1'>70</div><div class=t style='left:2003.00px;top:655.60px;font-size:26px;line-height:26px;color:#2A64D1'>7</div><div class=t style='left:1774.04px;top:724.00px;font-size:26px;line-height:26px;color:#2A64D1'>36</div><div class=t style='left:2003.00px;top:724.00px;font-size:26px;line-height:26px;color:#2A64D1'>6</div><div class=t style='left:1774.04px;top:792.40px;font-size:26px;line-height:26px;color:#2A64D1'>21</div><div class=t style='left:2003.00px;top:792.40px;font-size:26px;line-height:26px;color:#2A64D1'>2</div><div class=t style='left:1774.04px;top:860.80px;font-size:26px;line-height:26px;color:#2A64D1'>15</div><div class=t style='left:2003.00px;top:860.80px;font-size:26px;line-height:26px;color:#2A64D1'>1</div><div class=t style='left:1788.50px;top:929.20px;font-size:26px;line-height:26px;color:#2A64D1'>4</div><div class=t style='left:2003.00px;top:929.20px;font-size:26px;line-height:26px;color:#E1703A'>0</div><div class=t style='left:1788.50px;top:997.60px;font-size:26px;line-height:26px;color:#2A64D1'>8</div><div class=t style='left:2003.00px;top:997.60px;font-size:26px;line-height:26px;color:#E1703A'>0</div><div class=t style='left:1775.97px;top:1066.00px;font-size:26px;line-height:26px;color:#2A64D1'>11</div><div class=t style='left:2003.00px;top:1066.00px;font-size:26px;line-height:26px;color:#E1703A'>0</div><div class=t style='left:1774.04px;top:1134.40px;font-size:26px;line-height:26px;color:#2A64D1'>26</div><div class=t style='left:2003.00px;top:1134.40px;font-size:26px;line-height:26px;color:#2A64D1'>1</div><div class=t style='left:1774.04px;top:1202.80px;font-size:26px;line-height:26px;color:#2A64D1'>18</div><div class=t style='left:2003.00px;top:1202.80px;font-size:26px;line-height:26px;color:#2A64D1'>3</div><div class=t style='left:1774.04px;top:1271.20px;font-size:26px;line-height:26px;color:#2A64D1'>17</div><div class=t style='left:2003.00px;top:1271.20px;font-size:26px;line-height:26px;color:#2A64D1'>3</div><div class=t style='left:1774.04px;top:1339.60px;font-size:26px;line-height:26px;color:#2A64D1'>47</div><div class=t style='left:2003.00px;top:1339.60px;font-size:26px;line-height:26px;color:#2A64D1'>1</div><div class=t style='left:1774.04px;top:1408.00px;font-size:26px;line-height:26px;color:#2A64D1'>99</div><div class=t style='left:2003.00px;top:1408.00px;font-size:26px;line-height:26px;color:#2A64D1'>2</div><div class=t style='left:1774.04px;top:1476.40px;font-size:26px;line-height:26px;color:#2A64D1'>81</div><div class=t style='left:2003.00px;top:1476.40px;font-size:26px;line-height:26px;color:#E1703A'>0</div></div></div>
<div id="footer"></div>
<svg class=ic style="left:0;top:1537px" width="24" height="69" viewBox="0 1537 24 69"><rect x="0" y="1537" width="1.2" height="35" fill="#D8D8D8"/><path d="M0 1569 L0 1606 L16.4 1606 A50 50 0 0 1 0 1569 Z" fill="#33504F"/><path d="M0 1569 A50 50 0 0 0 16.4 1606" fill="none" stroke="#0E1626" stroke-width="1.6"/></svg>
<div style='position:absolute;left:0;top:0;z-index:3'><div class=t style='left:72.00px;top:18.10px;font-size:23px;line-height:23px;font-weight:normal;color:#FFFFFF;letter-spacing:0.068px;-webkit-text-stroke:0.7px #FFFFFF;'>Précédent</div><div class=t style='left:236.00px;top:18.10px;font-size:23px;line-height:23px;font-weight:normal;color:#FFFFFF;letter-spacing:0.039px;-webkit-text-stroke:0.7px #FFFFFF;'>Homepage</div><div class=t style='left:406.00px;top:18.10px;font-size:23px;line-height:23px;font-weight:normal;color:#FFFFFF;letter-spacing:0.060px;-webkit-text-stroke:0.7px #FFFFFF;'>Gestion chaîne</div><div class=t style='left:43.63px;top:97.80px;font-size:34px;line-height:34px;font-weight:normal;color:#1E2320;letter-spacing:0.000px;transform:scaleX(0.9745);transform-origin:0 0;-webkit-text-stroke:0.9px #1E2320;'>Gestion chaîne</div><div class=t style='left:43.60px;top:140.80px;font-size:22px;line-height:22px;font-weight:normal;color:#6A6A6A;letter-spacing:0.470px;'>Créez de nouvelles chaînes ou gérez les chaînes existantes et leurs propriétés</div><div class=t style='left:43.69px;top:226.00px;font-size:26px;line-height:26px;font-weight:normal;color:#2A5EA7;letter-spacing:0.000px;transform:scaleX(0.9060);transform-origin:0 0;'>CHAÎNES</div><div class=t style='left:235.75px;top:226.00px;font-size:26px;line-height:26px;font-weight:normal;color:#6C6C6C;letter-spacing:0.000px;transform:scaleX(0.9477);transform-origin:0 0;'>CONTRIBUTIONS</div><div class=t style='left:526.00px;top:226.00px;font-size:26px;line-height:26px;font-weight:normal;color:#6C6C6C;letter-spacing:0.000px;transform:scaleX(0.8995);transform-origin:0 0;'>EXPERTS &amp; CHAÎNES</div><div class=t style='left:71.58px;top:310.00px;font-size:26px;line-height:26px;font-weight:normal;color:#6E6E6E;letter-spacing:0.000px;transform:scaleX(0.9120);transform-origin:0 0;-webkit-text-stroke:0.8px #6E6E6E;'>FILTRES</div><div class=t style='left:269.05px;top:310.00px;font-size:26px;line-height:26px;font-weight:normal;color:#6E6E6E;letter-spacing:0.000px;transform:scaleX(0.9469);transform-origin:0 0;-webkit-text-stroke:0.8px #6E6E6E;'>COLONNES</div><div class=t style='left:452.24px;top:310.00px;font-size:27px;line-height:27px;font-weight:normal;color:#6B6B6B;letter-spacing:0.000px;transform:scaleX(0.9633);transform-origin:0 0;'>Chercher...</div><div class=t style='left:77.00px;top:393.20px;font-size:27px;line-height:27px;font-weight:normal;color:#222623;letter-spacing:0.000px;transform:scaleX(0.8686);transform-origin:0 0;-webkit-text-stroke:0.7px #222623;'>VIGNETTE</div><div class=t style='left:248.70px;top:393.20px;font-size:27px;line-height:27px;font-weight:normal;color:#222623;letter-spacing:0.300px;-webkit-text-stroke:0.7px #222623;'>NOM</div><div class=t style='left:861.10px;top:393.20px;font-size:27px;line-height:27px;font-weight:normal;color:#222623;letter-spacing:0.000px;transform:scaleX(0.8243);transform-origin:0 0;-webkit-text-stroke:0.7px #222623;'>TYPE</div><div class=t style='left:1073.80px;top:393.20px;font-size:27px;line-height:27px;font-weight:normal;color:#222623;letter-spacing:0.000px;transform:scaleX(0.8880);transform-origin:0 0;-webkit-text-stroke:0.7px #222623;'>VISIBILITÉ</div><div class=t style='left:1386.20px;top:393.20px;font-size:27px;line-height:27px;font-weight:normal;color:#222623;letter-spacing:0.000px;transform:scaleX(0.8524);transform-origin:0 0;-webkit-text-stroke:0.7px #222623;'>DROITS DE TÉLÉVERSE...</div><div class=t style='left:1737.78px;top:393.20px;font-size:27px;line-height:27px;font-weight:normal;color:#222623;letter-spacing:0.000px;transform:scaleX(0.9183);transform-origin:0 0;-webkit-text-stroke:0.7px #222623;'>CONTENU</div><div class=t style='left:1960.25px;top:393.20px;font-size:27px;line-height:27px;font-weight:normal;color:#222623;letter-spacing:0.000px;transform:scaleX(0.8250);transform-origin:0 0;-webkit-text-stroke:0.7px #222623;'>EXPERTS</div><div class=t style='left:2125.54px;top:393.20px;font-size:27px;line-height:27px;font-weight:normal;color:#222623;letter-spacing:0.000px;transform:scaleX(0.8808);transform-origin:0 0;-webkit-text-stroke:0.7px #222623;'>ENSEMBLES D...</div><div class=t style='left:2395.51px;top:393.20px;font-size:27px;line-height:27px;font-weight:normal;color:#222623;letter-spacing:0.000px;transform:scaleX(0.8964);transform-origin:0 0;-webkit-text-stroke:0.7px #222623;'>PUBLIÉ</div><div class=t style='left:45.00px;top:1562.80px;font-size:26px;line-height:26px;font-weight:normal;color:#262A27;letter-spacing:0.000px;transform:scaleX(0.9757);transform-origin:0 0;'>30 de 30</div></div>
</body></html>
